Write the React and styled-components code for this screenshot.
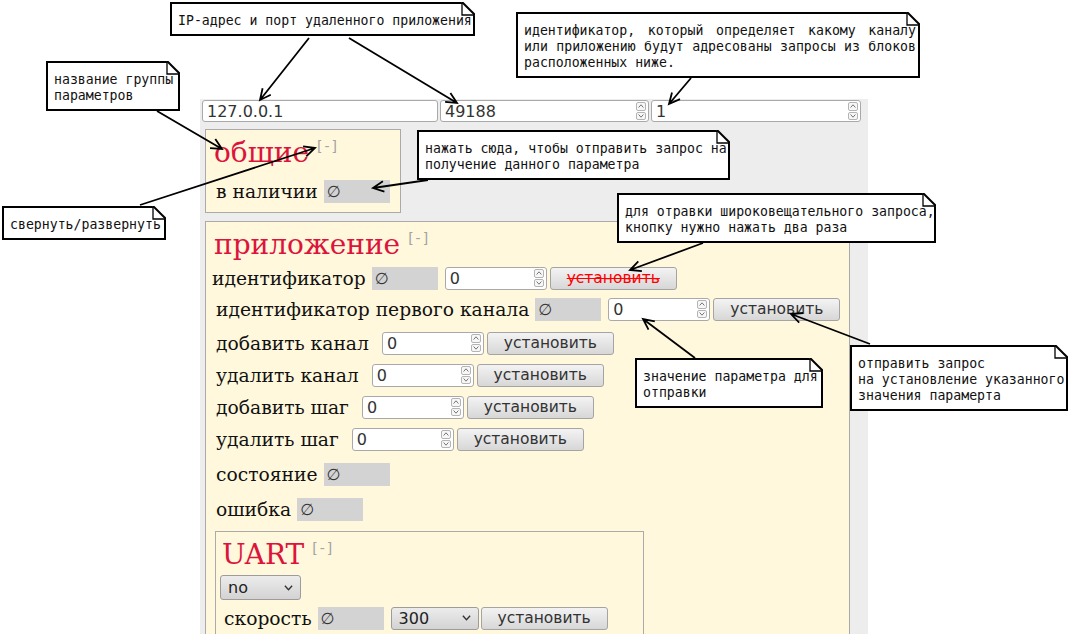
import React from 'react';
import styled, { createGlobalStyle, css } from 'styled-components';

const GlobalStyle = createGlobalStyle`
  html, body {
    margin: 0;
    padding: 0;
    background: #fff;
  }
  body {
    font-family: "DejaVu Serif", serif;
    color: #111;
  }
  * {
    box-sizing: border-box;
  }
`;

const Canvas = styled.div`
  position: relative;
  width: 1070px;
  height: 634px;
  overflow: hidden;
  padding: 99px 0 0 200px;
`;

const Panel = styled.div`
  width: 668px;
  height: 100%;
  background: #ededed;
  padding: 1px 2px;
  display: flex;
  flex-direction: column;
  align-items: flex-start;
`;

const AddressBar = styled.div`
  display: flex;
  gap: 2px;
`;

const Field = styled.div`
  display: flex;
  align-items: center;
  flex-shrink: 0;
  width: ${p => p.$w}px;
  height: ${p => p.$h || 23}px;
  margin-left: ${p => p.$ml || 0}px;
  padding: 0 2px 0 4px;
  background: #fff;
  border: 1px solid #a9a9a9;
  border-radius: 3px;
`;

const FieldInput = styled.input`
  flex: 1;
  min-width: 0;
  padding: 0;
  border: none;
  outline: none;
  background: transparent;
  font: 16px "DejaVu Sans", sans-serif;
  color: #333;
`;

const Spinner = styled.div`
  display: flex;
  flex-direction: column;
  gap: 1px;
  width: 10px;
  height: 18px;
`;

const SpinHalf = styled.span`
  flex: 1;
  display: flex;
  align-items: center;
  justify-content: center;
  background: #f7f7f7;
  border: 1px solid #b4b4b4;
  border-radius: 2px;
`;

const Group = styled.div`
  flex-shrink: 0;
  width: ${p => p.$w}px;
  min-height: ${p => p.$minH || 0}px;
  margin: ${p => p.$mt}px 0 0 3px;
  padding: 7px ${p => p.$pad}px ${p => p.$pb || 0}px;
  background: #fff8dc;
  border: 1px solid #aaa;
`;

const Title = styled.div`
  display: flex;
  align-items: flex-start;
  height: 32px;
  margin-left: 2px;
  font-size: 28px;
  line-height: 32px;
  color: #dc143c;
  white-space: nowrap;
`;

const Toggle = styled.span`
  margin: 2px 0 0 8px;
  font: 14px/1 "DejaVu Sans", sans-serif;
  letter-spacing: 2px;
  color: #a3a3a3;
`;

const Row = styled.div`
  display: flex;
  align-items: center;
  height: 24px;
  margin: ${p => p.$mt}px 0 0 ${p => (p.$ml === undefined ? 4 : p.$ml)}px;
`;

const Label = styled.span`
  margin-right: 6px;
  font-size: 18.7px;
  white-space: nowrap;
`;

const Output = styled.span`
  flex-shrink: 0;
  display: flex;
  align-items: center;
  width: 66px;
  height: 23px;
  padding-left: 3px;
  background: #d3d3d3;
  font: 16px "DejaVu Sans", sans-serif;
  color: #333;
`;

const SetButton = styled.button`
  flex-shrink: 0;
  width: 127px;
  height: 23px;
  margin-left: ${p => p.$ml || 3}px;
  padding: 0;
  border: 1px solid #a4a4a4;
  border-radius: 3px;
  background: linear-gradient(#f3f3f3, #d7d7d7);
  font: 15.5px "DejaVu Sans", sans-serif;
  color: #333;
  ${p => p.$struck && css`
    color: #f00;
    text-decoration: line-through;
  `}
`;

const Dropdown = styled.div`
  flex-shrink: 0;
  display: flex;
  align-items: center;
  justify-content: space-between;
  width: ${p => p.$w}px;
  height: ${p => p.$h}px;
  margin: ${p => p.$mt || 0}px 0 0 ${p => p.$ml || 0}px;
  padding: 0 7px 0 7px;
  border: 1px solid #9c9c9c;
  border-radius: 3px;
  background: linear-gradient(#ececec, #d3d3d3);
  font: 16px "DejaVu Sans", sans-serif;
  color: #222;
`;

const Note = styled.div`
  position: absolute;
  z-index: 2;
  left: ${p => p.$x}px;
  top: ${p => p.$y}px;
  width: ${p => p.$w}px;
  padding: 9px 2px 5px 6px;
  background: #fff;
  border: 2px solid #000;
  font: 13.2px/16px "DejaVu Sans Mono", monospace;
  color: #111;
  white-space: ${p => (p.$justify ? 'normal' : 'nowrap')};
  text-align: ${p => (p.$justify ? 'justify' : 'left')};
`;

const FoldMark = styled.svg`
  position: absolute;
  top: -2px;
  right: -2px;
`;

const Arrows = styled.svg`
  position: absolute;
  z-index: 3;
  left: 0;
  top: 0;
  pointer-events: none;
`;

const Chevron = ({ up, w = 6, h = 4, color = '#666' }) => (
  <svg width={w} height={h} viewBox="0 0 10 6">
    <path
      d={up ? 'M1 5.5 L5 1 L9 5.5' : 'M1 0.5 L5 5 L9 0.5'}
      fill="none"
      stroke={color}
      strokeWidth="1.5"
    />
  </svg>
);

const NumberInput = ({ value, w = 102, h = 23, ml, spin = true }) => (
  <Field $w={w} $h={h} $ml={ml}>
    <FieldInput defaultValue={value} />
    {spin && (
      <Spinner>
        <SpinHalf><Chevron up /></SpinHalf>
        <SpinHalf><Chevron /></SpinHalf>
      </Spinner>
    )}
  </Field>
);

const Select = ({ value, w, h, mt, ml }) => (
  <Dropdown $w={w} $h={h} $mt={mt} $ml={ml}>
    <span>{value}</span>
    <Chevron w={9} h={6} color="#333" />
  </Dropdown>
);

const Callout = ({ x, y, w, behind = '#fff', justify, children }) => (
  <Note $x={x} $y={y} $w={w} $justify={justify}>
    {children}
    <FoldMark width="14" height="14" viewBox="0 0 14 14">
      <polygon points="0,0 14,0 14,14" fill={behind} />
      <polygon points="1,0 1,13 14,13" fill="#fff" />
      <path d="M1 0 L14 13" stroke="#000" strokeWidth="2" fill="none" />
      <path d="M1 0 L1 13 L14 13" stroke="#000" strokeWidth="1.3" fill="none" />
    </FoldMark>
  </Note>
);

const arrows = [
  [309, 38, 260, 100],
  [349, 38, 457, 103],
  [691, 78, 669, 104],
  [157, 111, 222, 149],
  [140, 205, 315, 148],
  [428, 180, 373, 188],
  [703, 243, 630, 270],
  [695, 358, 643, 319],
  [870, 344, 791, 314],
];

const arrowPath = ([x1, y1, x2, y2]) => {
  const a = Math.atan2(y2 - y1, x2 - x1);
  const len = 12;
  const spread = 0.45;
  const wing = d =>
    `${(x2 - len * Math.cos(a + d)).toFixed(1)} ${(y2 - len * Math.sin(a + d)).toFixed(1)}`;
  return `M${x1} ${y1} L${x2} ${y2} M${wing(spread)} L${x2} ${y2} L${wing(-spread)}`;
};

const appRows = [
  { label: 'идентификатор', out: true, num: true, mt: 5, ml: 0, struck: true },
  { label: 'идентификатор первого канала', out: true, num: true, mt: 7 },
  { label: 'добавить канал', num: true, mt: 10 },
  { label: 'удалить канал', num: true, mt: 8 },
  { label: 'добавить шаг', num: true, mt: 8 },
  { label: 'удалить шаг', num: true, mt: 8 },
  { label: 'состояние', out: true, mt: 11 },
  { label: 'ошибка', out: true, mt: 11 },
];

const App = () => (
  <>
    <GlobalStyle />
    <Canvas>
      <Panel>
        <AddressBar>
          <NumberInput value="127.0.0.1" w={236} h={22} spin={false} />
          <NumberInput value="49188" w={209} h={22} />
          <NumberInput value="1" w={210} h={22} />
        </AddressBar>

        <Group $w={196} $mt={7} $pad={6} $pb={9}>
          <Title>общие<Toggle>[-]</Toggle></Title>
          <Row $mt={10}>
            <Label>в наличии</Label>
            <Output>∅</Output>
          </Row>
        </Group>

        <Group $w={645} $mt={8} $pad={6} $minH={420}>
          <Title>приложение<Toggle>[-]</Toggle></Title>
          {appRows.map(row => (
            <Row key={row.label} $mt={row.mt} $ml={row.ml}>
              <Label>{row.label}</Label>
              {row.out && <Output>∅</Output>}
              {row.num && <NumberInput value="0" ml={7} />}
              {row.num && <SetButton $struck={row.struck}>установить</SetButton>}
            </Row>
          ))}

          <Group $w={429} $mt={10} $pad={4} $minH={130}>
            <Title>UART<Toggle>[-]</Toggle></Title>
            <Select value="no" w={81} h={25} mt={4} />
            <Row $mt={6}>
              <Label>скорость</Label>
              <Output>∅</Output>
              <Select value="300" w={88} h={23} ml={7} />
              <SetButton $ml={2}>установить</SetButton>
            </Row>
          </Group>
        </Group>
      </Panel>

      <Callout x={170} y={2} w={305}>IP-адрес и порт удаленного приложения</Callout>
      <Callout x={46} y={61} w={134}>название группы<br />параметров</Callout>
      <Callout x={516} y={12} w={404} justify>
        идентификатор, который определяет какому каналу или приложению будут адресованы запросы из блоков расположенных ниже.
      </Callout>
      <Callout x={2} y={206} w={164}>свернуть/развернуть</Callout>
      <Callout x={417} y={130} w={313} behind="#ededed">
        нажать сюда, чтобы отправить запрос на<br />получение данного параметра
      </Callout>
      <Callout x={617} y={193} w={319}>
        для отравки широковещательного запроса,<br />кнопку нужно нажать два раза
      </Callout>
      <Callout x={635} y={358} w={188} behind="#fff8dc">
        значение параметра для<br />отправки
      </Callout>
      <Callout x={850} y={345} w={218}>
        отправить запрос<br />на установление указанного<br />значения парамерта
      </Callout>

      <Arrows width="1070" height="634" viewBox="0 0 1070 634">
        {arrows.map(a => (
          <path
            key={a.join('-')}
            d={arrowPath(a)}
            stroke="#000"
            strokeWidth="1.8"
            fill="none"
          />
        ))}
      </Arrows>
    </Canvas>
  </>
);

export default App;
